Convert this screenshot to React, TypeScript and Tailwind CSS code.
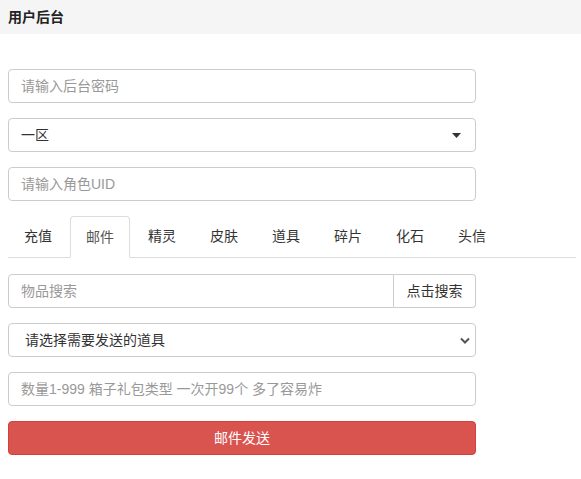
import { useState } from "react";

const tabs = ["充值", "邮件", "精灵", "皮肤", "道具", "碎片", "化石", "头信"];

const font = { fontFamily: '"Liberation Sans", "Noto Sans CJK SC", sans-serif' };

export default function App() {
  const [active, setActive] = useState(1);

  return (
    <div className="min-h-[479px] bg-white text-[14px] text-[#333]" style={font}>
      {/* header */}
      <div className="flex h-[34px] items-center bg-[#f5f5f5] px-2 text-[14px] font-bold text-[#222]">
        用户后台
      </div>

      <div className="px-2 pt-[35px]">
        <div className="flex w-[468px] flex-col gap-[15px]">
          <input
            className="h-[34px] rounded border border-[#ccc] px-3 text-[14px] outline-none placeholder:text-[#999]"
            placeholder="请输入后台密码"
          />
          <div className="flex h-[34px] items-center justify-between rounded border border-[#ccc] pl-3 pr-[14px] text-[#333]">
            <span>一区</span>
            <svg width="9" height="5" viewBox="0 0 9 5">
              <path d="M0 0h9L4.5 5z" fill="#333" />
            </svg>
          </div>
          <input
            className="h-[34px] rounded border border-[#ccc] px-3 text-[14px] outline-none placeholder:text-[#999]"
            placeholder="请输入角色UID"
          />
        </div>

        {/* tabs */}
        <div className="mt-[15px] flex w-[568px] border-b border-[#ddd]">
          {tabs.map((t, i) => (
            <button
              key={t}
              onClick={() => setActive(i)}
              className={
                i === active
                  ? "-mb-px mr-[2px] h-[42px] w-[60px] rounded-t border border-[#ddd] border-b-white bg-white"
                  : "mr-[2px] h-[41px] w-[60px] border border-transparent"
              }
            >
              <span className={i === active ? "text-[#555]" : "text-[#333]"}>{t}</span>
            </button>
          ))}
        </div>

        <div className="mt-4 flex w-[468px] flex-col gap-[15px]">
          <div className="flex h-[34px]">
            <input
              className="min-w-0 flex-1 rounded-l border border-[#ccc] px-3 text-[14px] outline-none placeholder:text-[#999]"
              placeholder="物品搜索"
            />
            <button className="w-[82px] rounded-r border border-l-0 border-[#ccc] bg-white text-[#333]">
              点击搜索
            </button>
          </div>
          <div className="flex h-[34px] items-center justify-between rounded border border-[#ccc] pl-4 pr-[5px] text-[#333]">
            <span>请选择需要发送的道具</span>
            <svg width="10" height="7" viewBox="0 0 10 7">
              <path d="M1 1.5l4 4 4-4" fill="none" stroke="#555" strokeWidth="2" />
            </svg>
          </div>
          <input
            className="h-[34px] rounded border border-[#ccc] px-3 text-[14px] outline-none placeholder:text-[#999]"
            placeholder="数量1-999 箱子礼包类型 一次开99个 多了容易炸"
          />
          <button className="h-[34px] rounded border border-[#d43f3a] bg-[#d9534f] text-[14px] text-white">
            邮件发送
          </button>
        </div>
      </div>
    </div>
  );
}
